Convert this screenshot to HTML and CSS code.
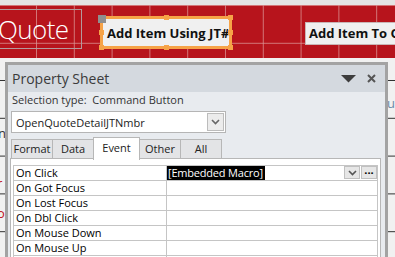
FILE: index.html
```html
<!DOCTYPE html>
<html lang="en">
<head>
    <meta charset="UTF-8">
    <meta name="viewport" content="width=device-width, initial-scale=1.0">
    <title>Quote - Property Sheet</title>
    <link rel="stylesheet" href="styles.css">
</head>
<body>

    <div class="designer">
        <!-- Form header section (design view) -->
        <div class="form-header">
            <div class="title-box"><span class="title-text">Quote</span></div>

            <div class="cmd-btn cmd-selected">
                <span class="move-handle"></span>
                <span class="handle h-tl"></span>
                <span class="handle h-tm"></span>
                <span class="handle h-tr"></span>
                <span class="handle h-ml"></span>
                <span class="handle h-mr"></span>
                <span class="handle h-bl"></span>
                <span class="handle h-bm"></span>
                <span class="handle h-br"></span>
                Add Item Using JT#
            </div>

            <div class="cmd-btn cmd-second">Add Item To Quote</div>
        </div>

        <!-- Detail section, mostly hidden by the property sheet -->
        <div class="form-detail">
            <span class="peek peek-a">n</span>
            <span class="peek peek-b red">r</span>
            <span class="peek peek-c red">o</span>
            <span class="peek peek-d blue">u</span>
        </div>

        <section class="prop-sheet">
            <header class="ps-head">
                <span class="ps-title">Property Sheet</span>
                <span class="ps-tools">
                    <svg width="15" height="8" viewBox="0 0 15 8"><path d="M0 0 H15 L7.5 7.5 Z" fill="#3d3d3d"/></svg>
                    <svg width="9" height="9" viewBox="0 0 9 9"><path d="M1 1 L8 8 M8 1 L1 8" stroke="#555" stroke-width="2"/></svg>
                </span>
            </header>

            <div class="ps-body">
                <div class="sel-type">Selection type:&nbsp; Command Button</div>

                <div class="combo">
                    <span class="combo-text">OpenQuoteDetailJTNmbr</span>
                    <span class="combo-btn">
                        <svg width="9" height="6" viewBox="0 0 9 6"><path d="M1 1 L4.5 4.5 L8 1" stroke="#666" stroke-width="1.6" fill="none"/></svg>
                    </span>
                </div>

                <div class="tabs">
                    <span class="tab">Format</span>
                    <span class="tab">Data</span>
                    <span class="tab active">Event</span>
                    <span class="tab">Other</span>
                    <span class="tab">All</span>
                </div>

                <div class="sheet">
                    <div class="grid">
                        <div class="row">
                            <span class="label">On Click</span>
                            <span class="value">
                                <span class="macro">[Embedded Macro]</span>
                                <span class="cell-btns">
                                    <span class="cell-btn">
                                        <svg width="9" height="6" viewBox="0 0 9 6"><path d="M1 1 L4.5 4.5 L8 1" stroke="#555" stroke-width="1.6" fill="none"/></svg>
                                    </span>
                                    <span class="cell-btn dots">&middot;&middot;&middot;</span>
                                </span>
                            </span>
                        </div>
                        <div class="row"><span class="label">On Got Focus</span><span class="value"></span></div>
                        <div class="row"><span class="label">On Lost Focus</span><span class="value"></span></div>
                        <div class="row"><span class="label">On Dbl Click</span><span class="value"></span></div>
                        <div class="row"><span class="label">On Mouse Down</span><span class="value"></span></div>
                        <div class="row"><span class="label">On Mouse Up</span><span class="value"></span></div>
                        <div class="row"><span class="label">On Mouse Move</span><span class="value"></span></div>
                    </div>
                </div>
            </div>
        </section>
    </div>

</body>
</html>
```

FILE: styles.css
```css
 body {
     margin: 0;
     font-family: "Open Sans", "Noto Sans", sans-serif;
     background-color: #e4e4e4;
 }

 .designer {
     position: relative;
     width: 395px;
     height: 257px;
     overflow: hidden;
     padding-top: 5px;
     box-sizing: border-box;
 }

 /* Form header section */
 .form-header {
     position: relative;
     height: 53px;
     background-color: #b7141c;
     background-image:
         linear-gradient(to right, rgba(220, 150, 150, 0.75) 1px, transparent 1px),
         linear-gradient(to bottom, rgba(220, 150, 150, 0.75) 1px, transparent 1px);
     background-size: 37.8px 37.8px;
     background-position: -1.8px 0;
 }

 .title-box {
     position: absolute;
     left: -2px;
     top: 4px;
     width: 82px;
     height: 38px;
     border: 1px solid #b49a9c;
     overflow: hidden;
 }

 .title-text {
     display: block;
     margin-left: -1px;
     color: #fff;
     font-size: 26px;
     font-weight: 300;
     letter-spacing: -0.6px;
     line-height: 38px;
 }

 .cmd-btn {
     position: absolute;
     background-color: #f0f0f0;
     font-weight: bold;
     font-size: 13px;
     color: #111;
     white-space: nowrap;
     box-sizing: border-box;
 }

 .cmd-selected {
     left: 100px;
     top: 11px;
     width: 132px;
     height: 33px;
     border: 3px solid #f6a347;
     padding: 4px 0 0 4px;
     line-height: 20px;
 }

 .cmd-second {
     left: 305px;
     top: 17px;
     width: 120px;
     height: 23px;
     border: 1px solid #c9b6b6;
     padding-left: 3px;
     line-height: 21px;
 }

 .handle {
     position: absolute;
     width: 5px;
     height: 5px;
     background-color: #f6a347;
 }
 .h-tl { left: -4px; top: -4px; }
 .h-tm { left: 61px; top: -4px; }
 .h-tr { right: -4px; top: -4px; }
 .h-ml { left: -4px; top: 11px; }
 .h-mr { right: -4px; top: 11px; }
 .h-bl { left: -4px; bottom: -4px; }
 .h-bm { left: 61px; bottom: -4px; }
 .h-br { right: -4px; bottom: -4px; }

 .move-handle {
     position: absolute;
     left: -5px;
     top: -4px;
     width: 8px;
     height: 8px;
     background-color: #8f8f8f;
     z-index: 2;
 }

 /* Detail section */
 .form-detail {
     position: relative;
     height: 199px;
     background-color: #f1f1f1;
     background-image: linear-gradient(to bottom, #303030 1px, transparent 1px);
     background-size: 100% 37.8px;
     background-position: 0 22px;
 }

 .peek {
     position: absolute;
     font-size: 13px;
     color: #333;
 }
 .peek-a { left: -2px; top: 66px; }
 .peek-b { left: -3px; top: 116px; }
 .peek-c { left: -3px; top: 146px; }
 .peek-d { left: 387px; top: 36px; }
 .red { color: #c0141c; }
 .blue { color: #6b8aa8; }

 /* Property sheet window */
 .prop-sheet {
     position: absolute;
     left: 5px;
     top: 62px;
     width: 383px;
     height: 210px;
     border: 3px solid #a3a3a3;
     box-sizing: border-box;
     background-color: #e8ebef;
     color: #222;
 }

 .ps-head {
     display: flex;
     justify-content: space-between;
     align-items: center;
     height: 27px;
     padding: 0 9px 0 4px;
     background-color: #d4d9df;
 }

 .ps-title {
     font-size: 14px;
     color: #3b3b3b;
 }

 .ps-tools {
     display: flex;
     align-items: center;
     gap: 11px;
 }

 .sel-type {
     font-size: 11px;
     line-height: 15px;
     padding-left: 4px;
     color: #333;
 }

 .combo {
     display: flex;
     align-items: center;
     justify-content: space-between;
     width: 215px;
     height: 22px;
     margin: 4px 0 0 3px;
     border: 1px solid #b5b5b5;
     background-color: #fff;
     box-sizing: border-box;
     padding: 0 1px 0 4px;
     font-size: 11px;
 }

 .combo-btn {
     display: flex;
     align-items: center;
     justify-content: center;
     width: 17px;
     height: 18px;
     border: 1px solid #bcbcbc;
     background-color: #ececec;
     box-sizing: border-box;
 }

 .tabs {
     display: flex;
     align-items: flex-end;
     height: 25px;
     margin-left: 3px;
 }

 .tab {
     width: 42px;
     height: 19px;
     box-sizing: border-box;
     border: 1px solid #b7b7b7;
     border-bottom: none;
     background-color: #e3e4e6;
     font-size: 11px;
     line-height: 18px;
     text-align: center;
     margin-right: -1px;
 }

 .tab.active {
     width: 47px;
     height: 23px;
     background-color: #fff;
     position: relative;
     z-index: 1;
     margin-bottom: -2px;
     line-height: 19px;
 }

 .sheet {
     margin: 0 4px 0 2px;
     height: 110px;
     border: 1px solid #b7b7b7;
     background-color: #fff;
     padding: 6px 2px 0 2px;
 }

 .grid {
     border-top: 1px solid #c5c5c5;
     border-left: 1px solid #c5c5c5;
 }

 .row {
     display: grid;
     grid-template-columns: 153px 1fr;
     height: 15px;
     border-bottom: 1px solid #c5c5c5;
     box-sizing: border-box;
     font-size: 11px;
     line-height: 14px;
     color: #000;
 }

 .label {
     padding-left: 2px;
     border-right: 1px solid #c5c5c5;
     white-space: nowrap;
 }

 .value {
     display: flex;
     justify-content: space-between;
     border-right: 1px solid #c5c5c5;
 }

 .macro {
     background-color: #000;
     color: #fff;
     padding: 0 2px 0 1px;
     letter-spacing: -0.2px;
     white-space: nowrap;
 }

 .cell-btns {
     display: flex;
     gap: 1px;
 }

 .cell-btn {
     display: flex;
     align-items: center;
     justify-content: center;
     width: 16px;
     height: 13px;
     border: 1px solid #c0c0c0;
     background-color: #e6e6e6;
     box-sizing: border-box;
     font-size: 11px;
     font-weight: bold;
     line-height: 10px;
 }
```
